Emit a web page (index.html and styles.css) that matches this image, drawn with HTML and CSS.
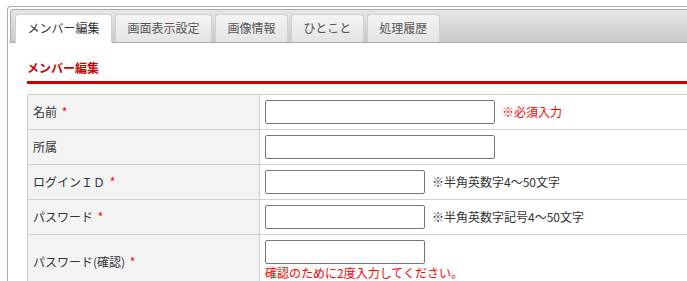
FILE: index.html
```html
<!DOCTYPE html>
<html lang="ja">
<head>
<meta charset="utf-8">
<title>メンバー編集</title>
<link rel="stylesheet" href="styles.css">
</head>
<body>
<div class="panel">
  <ul class="tabbar">
    <li class="tab active">メンバー編集</li>
    <li class="tab">画面表示設定</li>
    <li class="tab">画像情報</li>
    <li class="tab">ひとこと</li>
    <li class="tab">処理履歴</li>
  </ul>
  <div class="content">
    <h2 class="heading">メンバー編集</h2>
    <table class="form">
      <tr>
        <th>名前 <span class="req">*</span></th>
        <td><input class="inp wide" type="text"><span class="note red">※必須入力</span></td>
      </tr>
      <tr>
        <th>所属</th>
        <td><input class="inp wide" type="text"></td>
      </tr>
      <tr>
        <th>ログインＩＤ <span class="req">*</span></th>
        <td><input class="inp short" type="text"><span class="note">※半角英数字4〜50文字</span></td>
      </tr>
      <tr>
        <th>パスワード <span class="req">*</span></th>
        <td><input class="inp short" type="password"><span class="note">※半角英数字記号4〜50文字</span></td>
      </tr>
      <tr class="last">
        <th>パスワード(確認) <span class="req">*</span></th>
        <td><input class="inp short" type="password"><div class="hint">確認のために2度入力してください。</div></td>
      </tr>
    </table>
  </div>
</div>
</body>
</html>
```

FILE: styles.css
```css
html, body {
  margin: 0;
  padding: 0;
  background: #fff;
  overflow: hidden;
}
body {
  font-family: "Noto Sans CJK JP", "Noto Sans", sans-serif;
  font-size: 12px;
  color: #333;
}
.panel {
  margin: 6px 0 0 7px;
  border: 1px solid #aaa;
  border-right: none;
  border-top-left-radius: 4px;
  padding: 2px 0 0 2px;
  height: 400px;
  overflow: hidden;
}
.tabbar {
  list-style: none;
  margin: 0;
  padding: 4px 0 0 4px;
  display: flex;
  gap: 3px;
  height: 28px;
  border: 1px solid #aaa;
  border-right: none;
  border-top-left-radius: 4px;
  background: linear-gradient(#e6e6e6, #c9c9c9);
}
.tab {
  padding: 0 11.5px 1px;
  line-height: 26px;
  border: 1px solid #d0d0d0;
  border-bottom: none;
  border-radius: 4px 4px 0 0;
  background: linear-gradient(#f5f5f5, #e3e3e3);
  color: #555;
  white-space: nowrap;
}
.tab.active {
  background: #fff;
  color: #333;
  padding-bottom: 2px;
  margin-bottom: -1px;
  position: relative;
}
.content {
  padding: 0 0 0 17px;
}
.heading {
  margin: 17px 0 0;
  font-size: 12px;
  line-height: 16px;
  font-weight: bold;
  color: #c00;
  padding: 0 0 5px;
  border-bottom: 3px solid #c00;
}
.form {
  margin-top: 10px;
  border-collapse: collapse;
  width: calc(100% + 40px);
}
.form th, .form td {
  border: 1px solid #d0d0d0;
  padding: 5px;
  line-height: 16px;
  vertical-align: middle;
  text-align: left;
  white-space: nowrap;
}
.form th {
  width: 221px;
  background: #f2f3f2;
  font-weight: normal;
  color: #333;
}
.form td {
  height: 24px;
}
.req {
  color: #f00;
  margin-left: 2px;
}
.inp {
  box-sizing: border-box;
  height: 24px;
  margin: 0;
  border: 1px solid #767676;
  border-radius: 2px;
  vertical-align: middle;
  font: inherit;
  padding: 0 3px;
}
.wide { width: 230px; }
.short { width: 160px; }
.note {
  margin-left: 7px;
  vertical-align: middle;
  color: #333;
}
.note.red { color: #f00; }
.form .last td {
  padding-bottom: 8px;
}
.hint {
  color: #f00;
  line-height: 15px;
  margin-top: 1px;
}
```
